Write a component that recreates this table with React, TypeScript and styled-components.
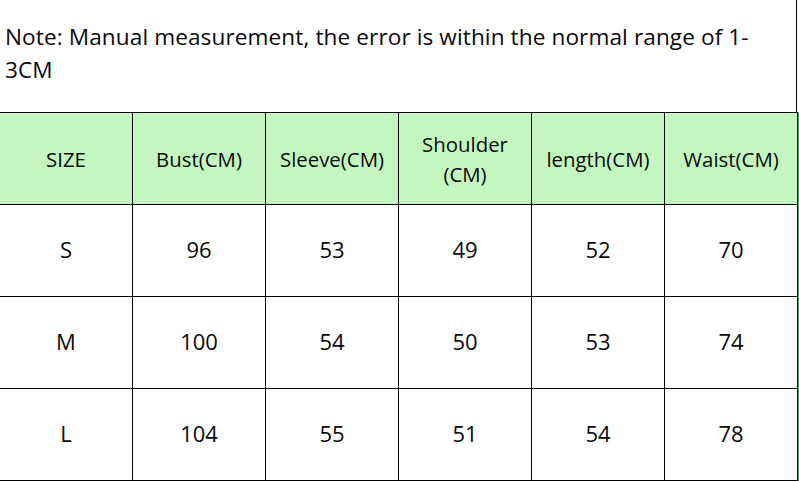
import React from 'react';
import styled, { createGlobalStyle } from 'styled-components';

const GlobalStyle = createGlobalStyle`
  html, body {
    margin: 0;
    padding: 0;
    background: #ffffff;
  }
  body {
    font-family: 'Open Sans', 'Noto Sans CJK SC', sans-serif;
    color: #0a0a0a;
  }
`;

const Page = styled.div`
  width: 799px;
  height: 482px;
  overflow: hidden;
  background: #ffffff;
`;

const Note = styled.div`
  box-sizing: border-box;
  width: 797px;
  height: 112px;
  padding: 20px 0 0 5px;
  border-right: 1px solid #000000;
  font-size: 22.6px;
  line-height: 33px;
  letter-spacing: 0.1px;
`;

const Grid = styled.div`
  display: grid;
  grid-template-columns: repeat(6, 132px);
  grid-auto-rows: 91px;
  gap: 1px;
  width: 797px;
  padding: 1px 1px 1px 0;
  background: #000000;
  border-right: 1px solid #35b56c;
`;

const Cell = styled.div<{ $head?: boolean }>`
  display: flex;
  align-items: center;
  justify-content: center;
  text-align: center;
  background: ${(p) => (p.$head ? '#c4f7c0' : '#ffffff')};
  font-size: ${(p) => (p.$head ? '20.4px' : '22px')};
  line-height: 30px;
  padding-bottom: ${(p) => (p.$head ? '0' : '3px')};
`;

const headers = ['SIZE', 'Bust(CM)', 'Sleeve(CM)', 'Shoulder (CM)', 'length(CM)', 'Waist(CM)'];

const rows = [
  ['S', '96', '53', '49', '52', '70'],
  ['M', '100', '54', '50', '53', '74'],
  ['L', '104', '55', '51', '54', '78'],
];

export default function App() {
  return (
    <Page>
      <GlobalStyle />
      <Note>
        Note: Manual measurement, the error is within the normal range of 1-
        <br />
        3CM
      </Note>
      <Grid>
        {headers.map((h) => (
          <Cell $head key={h}>
            {h === 'Shoulder (CM)' ? (
              <span>
                Shoulder
                <br />
                (CM)
              </span>
            ) : (
              h
            )}
          </Cell>
        ))}
        {rows.map((r) => r.map((v, i) => <Cell key={r[0] + i}>{v}</Cell>))}
      </Grid>
    </Page>
  );
}
